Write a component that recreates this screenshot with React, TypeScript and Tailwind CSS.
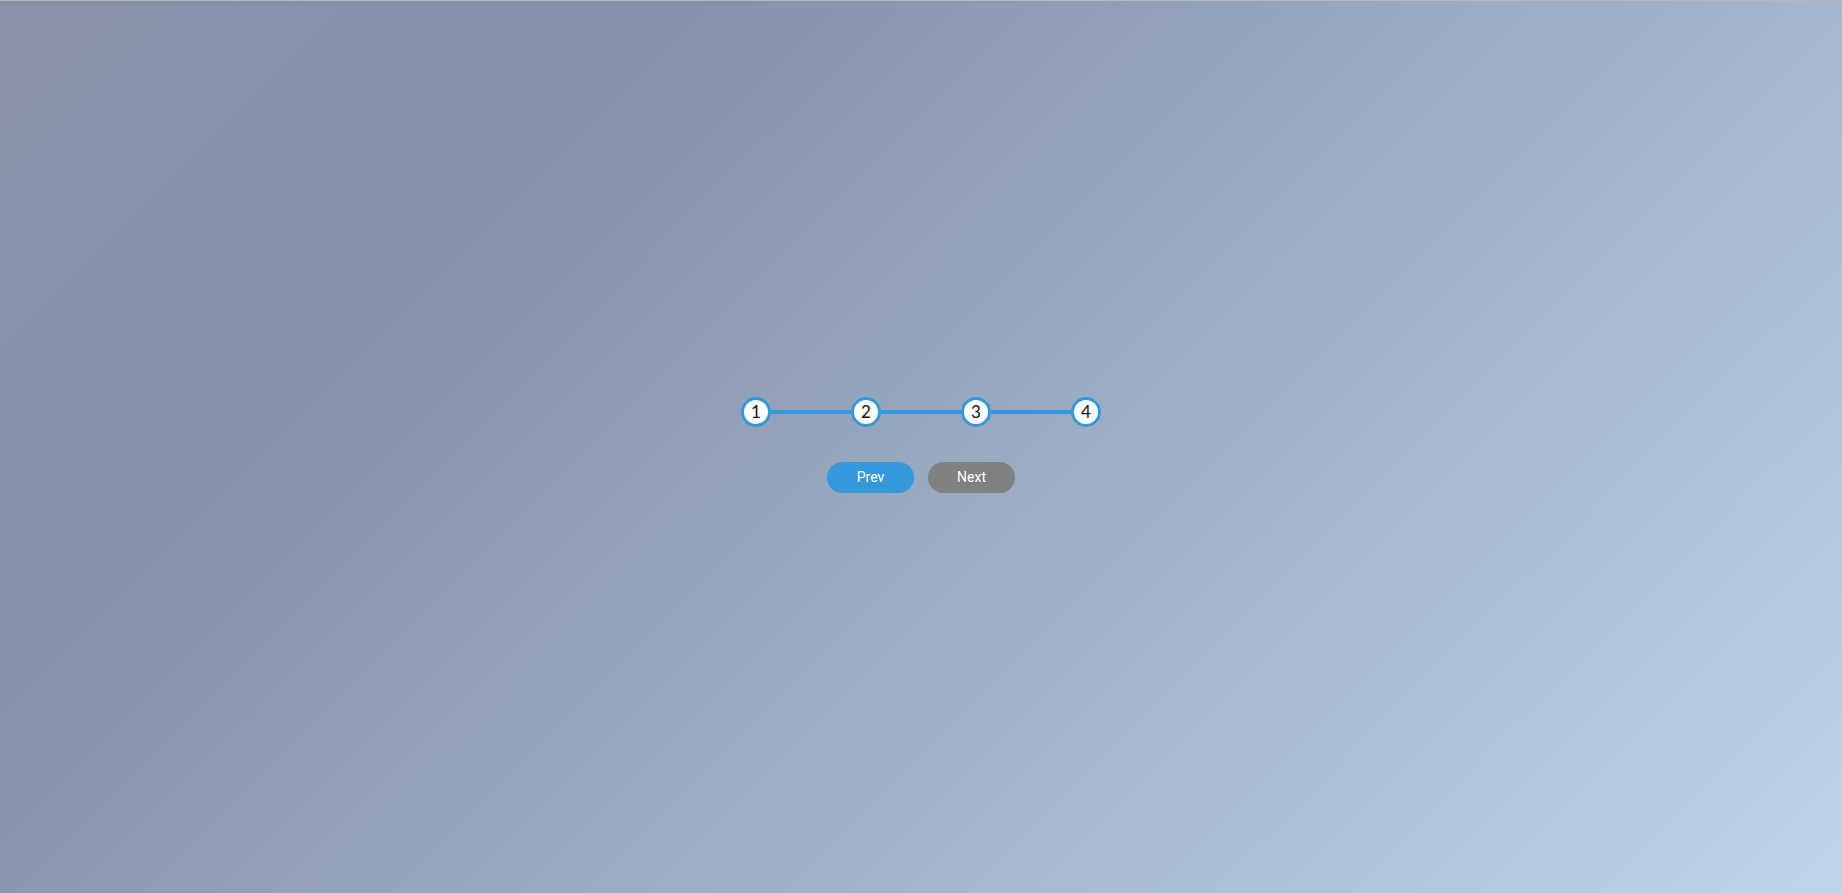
import { useState } from "react";

const steps = [1, 2, 3, 4];

export default function App() {
  const [active, setActive] = useState(1);

  return (
    <div className="flex flex-col h-[893px] w-full bg-[linear-gradient(135deg,#8893aa_0%,#8491a9_25%,#bed5ea_100%)]">
      <div className="h-px w-full bg-[#b4b8c0]" />
      <div className="flex flex-1 flex-col items-center justify-center pb-[5px]">
        <div className="flex items-center">
          {steps.map((s, i) => (
            <div key={s} className="flex items-center">
              {i > 0 && (
                <div
                  className={
                    s <= active + 3 ? "h-1 w-[80px] bg-[#3498db]" : "h-1 w-[80px] bg-gray-300"
                  }
                />
              )}
              <div className="flex h-[30px] w-[30px] items-center justify-center rounded-full border-[3px] border-[#3498db] bg-white font-['Lato',sans-serif] text-[17px] font-normal text-[#111]">
                {s}
              </div>
            </div>
          ))}
        </div>
        <div className="mt-[35px] flex gap-[14px] font-['Roboto',sans-serif] text-[14px] text-white">
          <button
            className="h-[31px] w-[87px] rounded-full bg-[#3498db]"
            onClick={() => setActive(Math.max(1, active - 1))}
          >
            Prev
          </button>
          <button
            className="h-[31px] w-[87px] rounded-full bg-[#808080]"
            onClick={() => setActive(Math.min(4, active + 1))}
          >
            Next
          </button>
        </div>
      </div>
    </div>
  );
}
